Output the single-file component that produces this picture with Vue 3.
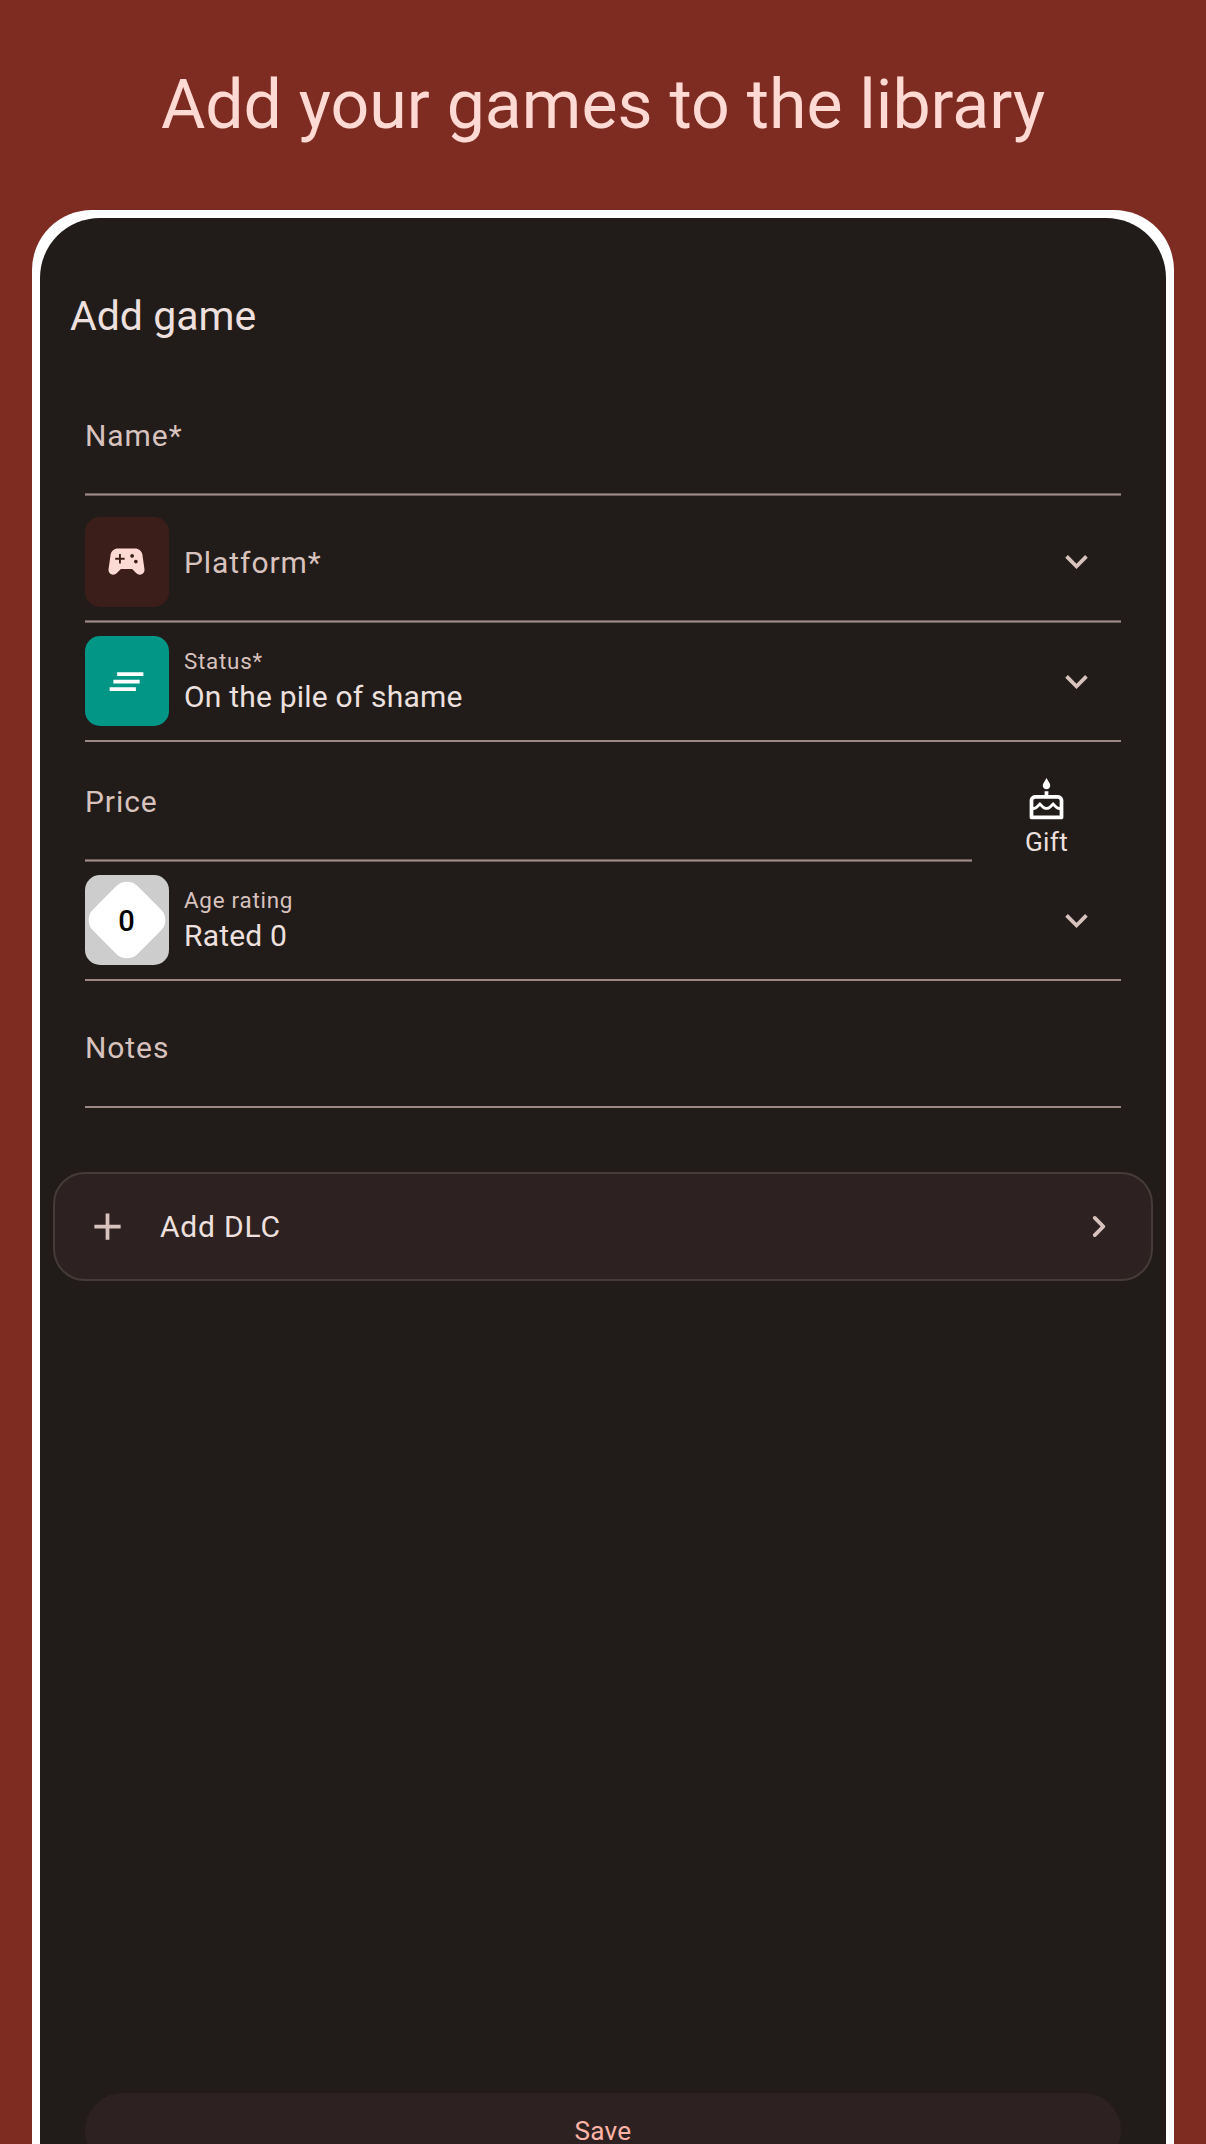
<script setup>
const icons = {
  gamepad:
    'M21.58 16.09l-1.09-7.66C20.21 6.46 18.52 5 16.53 5H7.47C5.48 5 3.79 6.46 3.51 8.43l-1.09 7.66C2.2 17.63 3.39 19 4.94 19c.68 0 1.32-.27 1.8-.75L9 16h6l2.25 2.25c.48.48 1.13.75 1.8.75 1.56 0 2.75-1.37 2.53-2.91zM11 11H9v2H8v-2H6v-1h2V8h1v2h2v1zm4-1c-.55 0-1-.45-1-1s.45-1 1-1 1 .45 1 1-.45 1-1 1zm2 3c-.55 0-1-.45-1-1s.45-1 1-1 1 .45 1 1-.45 1-1 1z',
  pile: 'M5 13h14v-2H5v2zm-2 4h14v-2H3v2zM7 7v2h14V7H7z',
  expand: 'M16.59 8.59L12 13.17 7.41 8.59 6 10l6 6 6-6z',
  cake:
    'M12 6c1.11 0 2-.9 2-2 0-.38-.1-.73-.29-1.03L12 0l-1.71 2.97c-.19.3-.29.65-.29 1.03 0 1.1.9 2 2 2zm6 3h-5V7h-2v2H6c-1.66 0-3 1.34-3 3v9c0 .55.45 1 1 1h16c.55 0 1-.45 1-1v-9c0-1.66-1.34-3-3-3zm1 11H5v-3c.9-.01 1.76-.37 2.4-1.01l1.09-1.07 1.07 1.07c1.31 1.31 3.59 1.3 4.89 0l1.08-1.07 1.07 1.07c.64.64 1.5 1 2.4 1.01v3zm0-4.5c-.51-.01-.99-.2-1.35-.57l-2.13-2.13-2.14 2.13c-.74.74-2.03.74-2.77 0L8.48 12.8l-2.14 2.13c-.35.36-.83.56-1.34.57V12c0-.55.45-1 1-1h12c.55 0 1 .45 1 1v3.5z',
  plus: 'M19 13h-6v6h-2v-6H5v-2h6V5h2v6h6v2z',
  next:
    'M9.29 6.71c-.39.39-.39 1.02 0 1.41L13.17 12l-3.88 3.88c-.39.39-.39 1.02 0 1.41.39.39 1.02.39 1.41 0l4.59-4.59c.39-.39.39-1.02 0-1.41L10.7 6.7c-.38-.38-1.02-.38-1.41.01z',
}
</script>

<template>
  <div class="page">
    <h1 class="headline">Add your games to the library</h1>
    <div class="frame">
      <main class="screen">
        <h2 class="title">Add game</h2>

        <div class="form">
          <div class="field soft name"><span class="label">Name*</span></div>

          <div class="field soft tall">
            <div class="tile platform">
              <svg class="icon" viewBox="0 0 24 24"><path :d="icons.gamepad" /></svg>
            </div>
            <span class="label grow">Platform*</span>
            <svg class="icon chevron" viewBox="0 0 24 24"><path :d="icons.expand" /></svg>
          </div>

          <div class="field">
            <div class="tile status">
              <svg class="icon" viewBox="0 0 24 24"><path :d="icons.pile" /></svg>
            </div>
            <div class="stack grow">
              <span class="caption">Status*</span>
              <span class="value">On the pile of shame</span>
            </div>
            <svg class="icon chevron" viewBox="0 0 24 24"><path :d="icons.expand" /></svg>
          </div>

          <div class="row">
            <div class="field soft price"><span class="label">Price</span></div>
            <div class="gift">
              <svg class="icon" viewBox="0 0 24 24"><path :d="icons.cake" /></svg>
              <span>Gift</span>
            </div>
          </div>

          <div class="field">
            <div class="tile rating">
              <svg class="diamond" viewBox="0 0 84 90">
                <rect x="10.5" y="13.5" width="63" height="63" rx="15" transform="rotate(45 42 45)" />
              </svg>
              <span class="age">0</span>
            </div>
            <div class="stack grow">
              <span class="caption">Age rating</span>
              <span class="value">Rated 0</span>
            </div>
            <svg class="icon chevron" viewBox="0 0 24 24"><path :d="icons.expand" /></svg>
          </div>

          <div class="field tall notes"><span class="label">Notes</span></div>
        </div>

        <div class="dlc">
          <svg class="icon" viewBox="0 0 24 24"><path :d="icons.plus" /></svg>
          <span class="dlc-text">Add DLC</span>
          <svg class="icon" viewBox="0 0 24 24"><path :d="icons.next" /></svg>
        </div>

        <button class="save">Save</button>
      </main>
    </div>
  </div>
</template>

<style>
body {
  margin: 0;
  background: #7e2b21;
}
</style>

<style scoped>
.page {
  width: 1206px;
  height: 2144px;
  overflow: hidden;
  box-sizing: border-box;
  padding: 0 32px;
  background: #7e2b21;
  font-family: Roboto, sans-serif;
  display: flex;
  flex-direction: column;
}
.headline {
  margin: 0;
  height: 210px;
  line-height: 210px;
  text-align: center;
  font-size: 68px;
  font-weight: 400;
  color: #ffdad4;
  white-space: nowrap;
}
.frame {
  flex: none;
  height: 2000px;
  box-sizing: border-box;
  padding: 8px;
  background: #fff;
  border-radius: 60px;
}
.screen {
  height: 100%;
  box-sizing: border-box;
  padding-top: 74px;
  background: #211b19;
  border-radius: 60px;
  display: flex;
  flex-direction: column;
}
.title {
  margin: 0 0 36px 30px;
  font-size: 41px;
  line-height: 48px;
  font-weight: 400;
  color: #ede0de;
}
.form {
  margin: 0 45px;
}
.field {
  box-sizing: border-box;
  height: 119px;
  border-bottom: 2px solid #9c8884;
  display: flex;
  align-items: center;
}
/* Underline with faded edges */
.soft {
  border-bottom: 0;
  padding-bottom: 2px;
  background: linear-gradient(#6c5e5b 1px, #a08c88 1px 2px, #6c5e5b 2px) bottom / 100% 3px no-repeat;
}
.name {
  height: 120px;
}
.tall {
  height: 127px;
  padding-top: 7px;
}
.label {
  padding-top: 2px;
  font-size: 30px;
  line-height: 36px;
  letter-spacing: 0.93px;
  color: #d8c2be;
}
.tile {
  position: relative;
  flex: none;
  width: 84px;
  height: 90px;
  margin: -1px 15px 0 0;
  border-radius: 15px;
  display: flex;
  align-items: center;
  justify-content: center;
}
.tile .icon {
  margin-right: 1px;
}
.platform {
  background: #3b1e1a;
  color: #ffdad4;
}
.status {
  background: #029687;
  color: #fff;
}
.rating {
  background: #cdcdcd;
}
.diamond {
  width: 84px;
  height: 90px;
  fill: #fff;
}
.age {
  position: absolute;
  inset: 0 1px 0 0;
  line-height: 92px;
  text-align: center;
  font-size: 29px;
  font-weight: 500;
  color: #000;
}
.icon {
  flex: none;
  display: block;
  width: 45px;
  height: 45px;
  fill: currentColor;
}
.chevron {
  margin: -1px 22px 0 0;
  color: #d8c2be;
}
.grow {
  flex: 1;
}
.stack {
  display: flex;
  flex-direction: column;
}
.caption {
  margin-top: -1px;
  font-size: 22.4px;
  line-height: 31px;
  letter-spacing: 0.75px;
  color: #d8c2be;
}
.value {
  font-size: 30px;
  line-height: 40px;
  letter-spacing: 0.2px;
  color: #ede0de;
}
.row {
  display: flex;
  height: 120px;
}
.price {
  width: 887px;
  height: 120px;
}
.gift {
  flex: 1;
  display: flex;
  flex-direction: column;
  align-items: center;
  padding-top: 36px;
  color: #fff;
}
.gift span {
  margin-top: 3px;
  font-size: 26.2px;
  line-height: 32px;
  letter-spacing: 0.3px;
  color: #ede0de;
}
.dlc {
  box-sizing: border-box;
  height: 109px;
  margin: 64px 13px 0;
  padding: 0 30px;
  border: 2px solid #463b39;
  border-radius: 32px;
  background: #2d2221;
  display: flex;
  align-items: center;
  color: #d8c2be;
}
.dlc-text {
  flex: 1;
  margin-left: 30px;
  font-size: 30px;
  line-height: 36px;
  letter-spacing: 0.8px;
  color: #ede0de;
}
.save {
  flex: none;
  margin: 812px 45px 0;
  padding: 0;
  height: 75px;
  border: 0;
  border-radius: 37.5px;
  background: #2d2221;
  font: 400 26.2px/76px Roboto, sans-serif;
  letter-spacing: 0.2px;
  color: #ffb4a8;
}
</style>
